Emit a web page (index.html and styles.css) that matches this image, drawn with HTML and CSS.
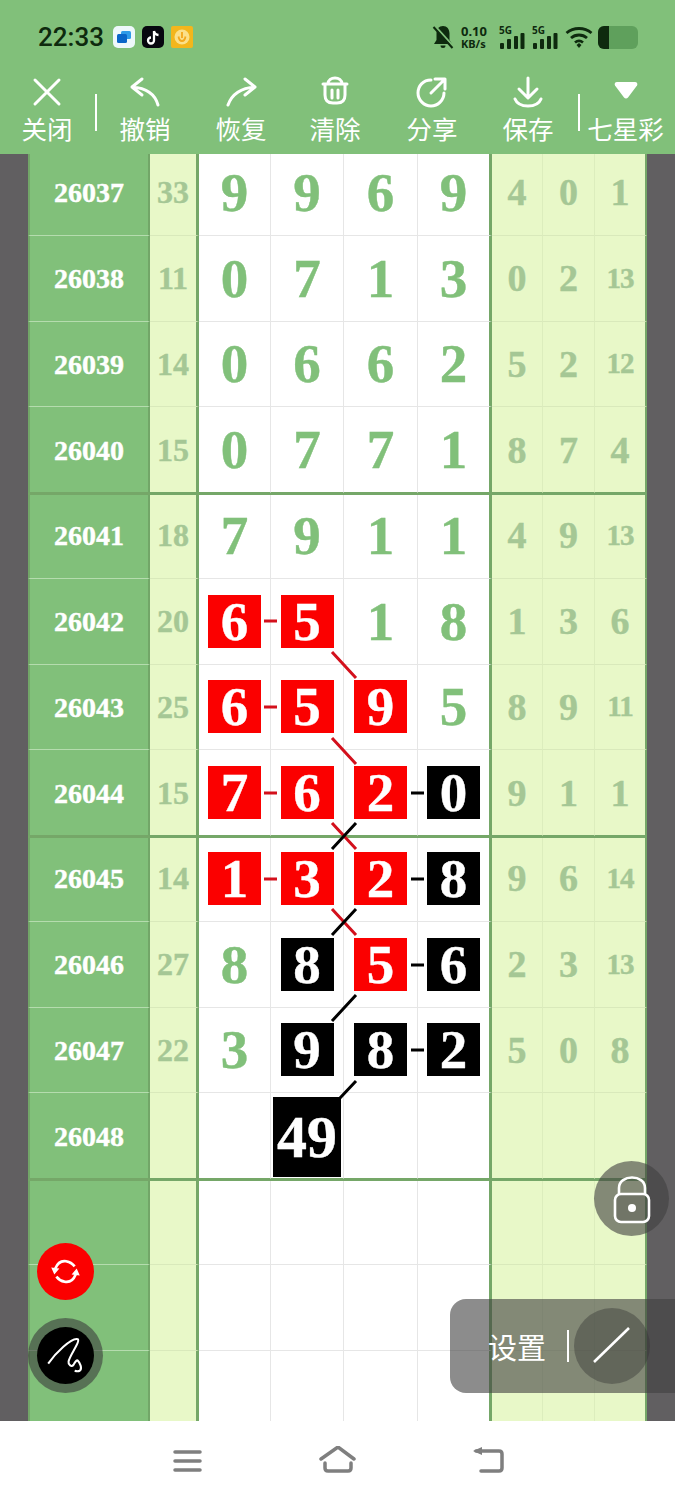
FILE: index.html
```html
<!DOCTYPE html>
<html lang="zh-CN">
<head>
    <meta charset="UTF-8">
    <meta name="viewport" content="width=device-width, initial-scale=1.0">
    <title>七星彩</title>
    <link rel="stylesheet" href="styles.css">
</head>
<body>
    <div class="header">
        <div class="status">
            <span class="time">22:33</span>
            <div class="app-icons">
                <svg class="app" viewBox="0 0 22 22"><rect width="22" height="22" rx="5" fill="#eef8fb"/><rect x="8" y="5" width="10" height="8" rx="1.5" fill="#2f9be8"/><rect x="4" y="8" width="10" height="9" rx="1.5" fill="#0a66c8"/></svg>
                <svg class="app" viewBox="0 0 22 22"><rect width="22" height="22" rx="5" fill="#07070f"/><path d="M12 5v9.500a3 3 0 1 1-3-3M12 5c.5 2.500 2 3.800 4.500 4" fill="none" stroke="#fff" stroke-width="2.300"/></svg>
                <svg class="app" viewBox="0 0 22 22"><rect width="22" height="22" rx="2" fill="#f3b61c"/><circle cx="11" cy="11" r="7.500" fill="#fbe08a"/><path d="M11 6v6M7.500 10.500c.5 3 2 4.500 3.500 4.500s3-1.500 3.500-4.500" fill="none" stroke="#f3a81c" stroke-width="1.800"/></svg>
            </div>
            <div class="sys-icons">
                <svg class="bell" viewBox="0 0 22 24"><path d="M11 1C7 1 4.500 4 4.500 8.500V15L2 19h18l-2.500-4V8.500C17.500 4 15 1 11 1z" fill="#0e2a0e"/><path d="M8.500 20.500a2.500 2.500 0 0 0 5 0z" fill="#0e2a0e"/><path d="M3 1l19 21" stroke="#81c07a" stroke-width="2"/><path d="M1.500 2l19 21" stroke="#0e2a0e" stroke-width="2"/></svg>
                <div class="speed"><b>0.10</b><b class="unit">KB/s</b></div>
                <svg class="signal" viewBox="0 0 26 24"><text x="0" y="9" class="net">5G</text><rect x="1" y="18" width="4" height="6" rx="1"/><rect x="8" y="14" width="4" height="10" rx="1"/><rect x="15" y="11" width="4" height="13" rx="1"/><rect x="21.500" y="8" width="4" height="16" rx="1"/></svg>
                <svg class="signal" viewBox="0 0 26 24"><text x="0" y="9" class="net">5G</text><rect x="1" y="18" width="4" height="6" rx="1"/><rect x="8" y="14" width="4" height="10" rx="1"/><rect x="15" y="11" width="4" height="13" rx="1"/><rect x="21.500" y="8" width="4" height="16" rx="1"/></svg>
                <svg class="wifi" viewBox="0 0 28 24"><path d="M1.500 8c7-6 18-6 25 0M6 13c4.500-4 11.500-4 16 0M10 17.500c2.500-2 5.500-2 8 0" fill="none" stroke="#0e2a0e" stroke-width="2.800"/><path d="M11.500 20l2.500-2 2.500 2-2.500 3z" fill="#0e2a0e"/></svg>
                <div class="battery"><div class="battery-fill"></div></div>
            </div>
        </div>
        <div class="toolbar">
            <div class="tool sep-right">
                <svg class="tool-icon" viewBox="0 0 36 36"><path d="M6 6l24 24M30 6L6 30"/></svg>
                <span>关闭</span>
            </div>
            <div class="tool">
                <svg class="tool-icon" viewBox="0 0 36 36"><path d="M15 5L5 13l10 8M5 13c14 1 23 7 26 18"/></svg>
                <span>撤销</span>
            </div>
            <div class="tool">
                <svg class="tool-icon" viewBox="0 0 36 36"><path d="M22 5l10 8-10 8M32 13C18 14 9 20 5 31"/></svg>
                <span>恢复</span>
            </div>
            <div class="tool">
                <svg class="tool-icon" viewBox="0 0 36 36"><path d="M11 10C11 2 25 2 25 10M6 10h24M8 10v11c0 6 3 8 8 8h4c5 0 8-2 8-8V10M15 16v8M21 16v8"/></svg>
                <span>清除</span>
            </div>
            <div class="tool">
                <svg class="tool-icon" viewBox="0 0 36 36"><path d="M17 6C9 6 4 12 4 19c0 7 6 13 13 13s13-6 13-13M17 19L31 5M21 5h10v10"/></svg>
                <span>分享</span>
            </div>
            <div class="tool">
                <svg class="tool-icon" viewBox="0 0 36 36"><path d="M18 4v19M9 15l9 9 9-9M5 25c2 5 7 7 13 7s11-2 13-7"/></svg>
                <span>保存</span>
            </div>
            <div class="tool sep-left">
                <svg class="tool-icon" viewBox="0 0 36 36"><path class="solid" d="M9 8h18c2 0 3 2 2 3.500l-9 12c-1 1.300-3 1.300-4 0l-9-12C6 10 7 8 9 8z"/></svg>
                <span>七星彩</span>
            </div>
        </div>
    </div>

    <div class="sheet">
        <div class="board">
            <div class="row"><div class="cell issue">26037</div><div class="cell sum">33</div><div class="cell main">9</div><div class="cell main">9</div><div class="cell main">6</div><div class="cell main last">9</div><div class="cell side">4</div><div class="cell side">0</div><div class="cell side">1</div></div>
            <div class="row"><div class="cell issue">26038</div><div class="cell sum">11</div><div class="cell main">0</div><div class="cell main">7</div><div class="cell main">1</div><div class="cell main last">3</div><div class="cell side">0</div><div class="cell side">2</div><div class="cell side two">13</div></div>
            <div class="row"><div class="cell issue">26039</div><div class="cell sum">14</div><div class="cell main">0</div><div class="cell main">6</div><div class="cell main">6</div><div class="cell main last">2</div><div class="cell side">5</div><div class="cell side">2</div><div class="cell side two">12</div></div>
            <div class="row end"><div class="cell issue">26040</div><div class="cell sum">15</div><div class="cell main">0</div><div class="cell main">7</div><div class="cell main">7</div><div class="cell main last">1</div><div class="cell side">8</div><div class="cell side">7</div><div class="cell side">4</div></div>
            <div class="row"><div class="cell issue">26041</div><div class="cell sum">18</div><div class="cell main">7</div><div class="cell main">9</div><div class="cell main">1</div><div class="cell main last">1</div><div class="cell side">4</div><div class="cell side">9</div><div class="cell side two">13</div></div>
            <div class="row"><div class="cell issue">26042</div><div class="cell sum">20</div><div class="cell main"><span class="box red">6</span></div><div class="cell main"><span class="box red">5</span></div><div class="cell main">1</div><div class="cell main last">8</div><div class="cell side">1</div><div class="cell side">3</div><div class="cell side">6</div></div>
            <div class="row"><div class="cell issue">26043</div><div class="cell sum">25</div><div class="cell main"><span class="box red">6</span></div><div class="cell main"><span class="box red">5</span></div><div class="cell main"><span class="box red">9</span></div><div class="cell main last">5</div><div class="cell side">8</div><div class="cell side">9</div><div class="cell side two">11</div></div>
            <div class="row end"><div class="cell issue">26044</div><div class="cell sum">15</div><div class="cell main"><span class="box red">7</span></div><div class="cell main"><span class="box red">6</span></div><div class="cell main"><span class="box red">2</span></div><div class="cell main last"><span class="box black">0</span></div><div class="cell side">9</div><div class="cell side">1</div><div class="cell side">1</div></div>
            <div class="row"><div class="cell issue">26045</div><div class="cell sum">14</div><div class="cell main"><span class="box red">1</span></div><div class="cell main"><span class="box red">3</span></div><div class="cell main"><span class="box red">2</span></div><div class="cell main last"><span class="box black">8</span></div><div class="cell side">9</div><div class="cell side">6</div><div class="cell side two">14</div></div>
            <div class="row"><div class="cell issue">26046</div><div class="cell sum">27</div><div class="cell main">8</div><div class="cell main"><span class="box black">8</span></div><div class="cell main"><span class="box red">5</span></div><div class="cell main last"><span class="box black">6</span></div><div class="cell side">2</div><div class="cell side">3</div><div class="cell side two">13</div></div>
            <div class="row"><div class="cell issue">26047</div><div class="cell sum">22</div><div class="cell main">3</div><div class="cell main"><span class="box black">9</span></div><div class="cell main"><span class="box black">8</span></div><div class="cell main last"><span class="box black">2</span></div><div class="cell side">5</div><div class="cell side">0</div><div class="cell side">8</div></div>
            <div class="row end"><div class="cell issue">26048</div><div class="cell sum"></div><div class="cell main"></div><div class="cell main"><span class="box black total">49</span></div><div class="cell main"></div><div class="cell main last"></div><div class="cell side"></div><div class="cell side"></div><div class="cell side"></div></div>
            <div class="row"><div class="cell issue"></div><div class="cell sum"></div><div class="cell main"></div><div class="cell main"></div><div class="cell main"></div><div class="cell main last"></div><div class="cell side"></div><div class="cell side"></div><div class="cell side"></div></div>
            <div class="row"><div class="cell issue"></div><div class="cell sum"></div><div class="cell main"></div><div class="cell main"></div><div class="cell main"></div><div class="cell main last"></div><div class="cell side"></div><div class="cell side"></div><div class="cell side"></div></div>
            <div class="row"><div class="cell issue"></div><div class="cell sum"></div><div class="cell main"></div><div class="cell main"></div><div class="cell main"></div><div class="cell main last"></div><div class="cell side"></div><div class="cell side"></div><div class="cell side"></div></div>
        </div>

        <!-- connector lines, in page coordinates -->
        <svg class="links" viewBox="0 154 675 1267">
            <g class="link-red">
                <path d="M264 621h13M264 707h13M264 793h13M264 879h13"/>
                <path d="M332 652l24 26M332 738l24 26M332 823l24 26M332 909l24 26"/>
            </g>
            <g class="link-black">
                <path d="M411 793h13M411 879h13M411 965h13M411 1050h13"/>
                <path d="M356 823l-24 26M356 909l-24 26M356 995l-24 26M356 1081l-16 17"/>
            </g>
        </svg>

        <div class="fab fab-sync">
            <svg viewBox="0 0 56 56"><path d="M18 25c2-5 6-8 11-7 3 .5 6 2.500 8 5M38 31c-2 5-6 8-11 7-3-.5-6-2.500-8-5" fill="none" stroke="#fff" stroke-width="2.600"/><path d="M14 24l8 1-5 6zM42 32l-8-1 5-6z" fill="#fff"/></svg>
        </div>
        <div class="pen-ring">
            <div class="fab-pen">
                <svg viewBox="0 0 56 56"><path d="M11 36C18 26 34 10 40 12c3 2-8 16-9 22-.5 3 3 6 5 3 1-2 3-5 4-4 2 2 5 8 2 10-2 1-5 0-5 0" fill="none" stroke="#fff" stroke-width="2"/></svg>
            </div>
        </div>
        <div class="lock">
            <svg viewBox="0 0 40 48"><path d="M7 19v-6C7-1 33-1 33 13v6" fill="none" stroke="#fff" stroke-width="2.600"/><rect x="3" y="19" width="34" height="28" rx="6" fill="rgba(60,60,60,.25)" stroke="#fff" stroke-width="2.600"/><circle cx="20" cy="33" r="4" fill="#fff"/></svg>
        </div>
        <div class="settings">
            <span class="settings-label">设置</span>
            <span class="settings-bar"></span>
            <div class="settings-knob">
                <svg viewBox="0 0 76 76"><path d="M20 54l35-34" stroke="#fff" stroke-width="2.600"/></svg>
            </div>
        </div>
    </div>

    <div class="navbar">
        <svg class="nav-icon menu-icon" viewBox="0 0 30 24"><path d="M2 3h25M2 12h25M2 21h25"/></svg>
        <svg class="nav-icon home-icon" viewBox="0 0 38 30"><path d="M2 13L19 1l16 12M6 17v5c0 2 1 3 3 3h20c2 0 3-1 3-3v-5"/></svg>
        <svg class="nav-icon back-icon" viewBox="0 0 34 30"><path d="M4 5h23c2 0 3 1 3 3v14c0 2-1 3-3 3H9"/><path class="solid" d="M1 5l9-4v8z"/></svg>
    </div>
</body>
</html>
```

FILE: styles.css
```css
* {
    box-sizing: border-box;
}
html, body {
    margin: 0;
    padding: 0;
}
body {
    width: 675px;
    height: 1500px;
    overflow: hidden;
    font-family: "Noto Sans CJK SC", "Noto Sans", sans-serif;
    background-color: #fff;
}

/* header */
.header {
    height: 154px;
    background-color: #81c07a;
}
.status {
    height: 72px;
    display: flex;
    align-items: center;
    padding: 2px 37px 0 38px;
}
.time {
    font-family: Roboto, sans-serif;
    font-size: 26px;
    font-weight: 500;
    color: #0e2a0e;
    width: 75px;
}
.app-icons {
    display: flex;
    gap: 7px;
}
.app {
    width: 22px;
    height: 22px;
    display: block;
}
.sys-icons {
    margin-left: auto;
    display: flex;
    align-items: center;
}
.bell {
    width: 22px;
    height: 24px;
    margin-right: 7px;
}
.speed {
    width: 30px;
    display: flex;
    flex-direction: column;
    font-family: "Noto Sans", sans-serif;
    font-size: 13px;
    line-height: 13px;
    color: #0e2a0e;
    margin-right: 8px;
}
.speed .unit {
    font-size: 11px;
    line-height: 11px;
}
.signal {
    width: 26px;
    height: 24px;
    margin-right: 7px;
    fill: #0e2a0e;
    overflow: visible;
}
.net {
    font-family: "Noto Sans", sans-serif;
    font-size: 10px;
    font-weight: 700;
}
.wifi {
    width: 28px;
    height: 24px;
    margin-right: 5px;
}
.battery {
    width: 40px;
    height: 23px;
    border-radius: 6px;
    background-color: #5fa05c;
    overflow: hidden;
}
.battery-fill {
    width: 11px;
    height: 100%;
    background-color: #0e2a0e;
}

.toolbar {
    display: grid;
    grid-template-columns: 94px 102px 90px 98px 96px 96px 99px;
    height: 82px;
}
.tool {
    position: relative;
    display: flex;
    flex-direction: column;
    align-items: center;
    color: #fff;
    font-size: 25.5px;
    line-height: 36px;
    padding-top: 2px;
    white-space: nowrap;
}
.tool-icon {
    width: 36px;
    height: 36px;
    display: block;
    fill: none;
    stroke: #fff;
    stroke-width: 3;
    stroke-linecap: round;
    stroke-linejoin: round;
}
.tool-icon .solid {
    fill: #fff;
    stroke: none;
}
.sep-right::after,
.sep-left::after {
    content: "";
    position: absolute;
    top: 22px;
    height: 37px;
    width: 2px;
    background-color: #fff;
}
.sep-right::after {
    right: -3px;
}
.sep-left::after {
    left: 2px;
}

/* lottery sheet */
.sheet {
    position: relative;
    height: 1267px;
    overflow: hidden;
    background-color: #615f61;
}
.board {
    width: 619px;
    margin: -4px 0 0 28px;
}
.row {
    display: grid;
    grid-template-columns: 122px 49px 72px 73px 74px 74px 51px 52px 52px;
    height: 85.75px;
}
.cell {
    display: flex;
    align-items: center;
    justify-content: center;
    font-family: "Liberation Serif", serif;
    font-weight: 700;
    line-height: 1;
    -webkit-text-stroke: 0.4px currentColor;
}
.issue {
    background-color: #81c07a;
    color: #fff;
    font-size: 28px;
    padding-top: 2px;
    border-left: 2px solid #72a668;
    border-right: 2px solid #72a668;
    border-bottom: 1px solid #b5dcae;
}
.sum {
    background-color: #e8f8c8;
    color: #a5c795;
    font-size: 32px;
    border-right: 3px solid #75a768;
    border-bottom: 1px solid #d9e9bb;
}
.main {
    background-color: #fff;
    color: #81c07a;
    font-size: 55px;
    border-right: 1px solid #e6e6e6;
    border-bottom: 1px solid #e6e6e6;
}
.main.last {
    border-right: 3px solid #75a768;
}
.side {
    background-color: #e8f8c8;
    color: #a5c795;
    font-size: 38px;
    border-right: 1px solid #dcedbd;
    border-bottom: 1px solid #d9e9bb;
}
.side:last-child {
    border-right: 2px solid #75a768;
}
.side.two {
    font-size: 29px;
    letter-spacing: -1px;
}

/* the heavy line sits across the row boundary */
.row.end {
    position: relative;
    z-index: 1;
    box-shadow: 0 2px 0 #75a768;
}
.row.end .cell {
    border-bottom: 1px solid #75a768;
}

.box {
    width: 53px;
    height: 53px;
    display: flex;
    align-items: center;
    justify-content: center;
    color: #fff;
    box-shadow: 0 0 5px 4px rgba(255, 255, 255, 0.9);
}
.red {
    background-color: #fb0000;
}
.black {
    background-color: #000;
}
.box.total {
    width: 68px;
    height: 80px;
    margin-top: 2px;
    font-size: 60px;
    box-shadow: none;
}

.links {
    position: absolute;
    z-index: 2;
    left: 0;
    top: 0;
    width: 675px;
    height: 1267px;
    fill: none;
    stroke-width: 3;
}
.link-red {
    stroke: #d3101c;
}
.link-black {
    stroke: #000;
}

/* floating buttons */
.fab-sync {
    position: absolute;
    z-index: 3;
    left: 37px;
    top: 1089px;
    width: 57px;
    height: 57px;
    border-radius: 50%;
    background-color: #fb0000;
}
.pen-ring {
    position: absolute;
    z-index: 3;
    left: 28px;
    top: 1164px;
    width: 75px;
    height: 75px;
    border-radius: 50%;
    background-color: rgba(60, 60, 60, 0.6);
    display: flex;
    align-items: center;
    justify-content: center;
}
.fab-pen {
    width: 57px;
    height: 57px;
    border-radius: 50%;
    background-color: #000;
}
.fab-sync svg,
.fab-pen svg {
    display: block;
    width: 57px;
    height: 57px;
}
.lock {
    position: absolute;
    z-index: 3;
    left: 594px;
    top: 1007px;
    width: 75px;
    height: 75px;
    border-radius: 50%;
    background-color: rgba(64, 64, 64, 0.6);
    display: flex;
    align-items: center;
    justify-content: center;
}
.lock svg {
    width: 40px;
    height: 48px;
    overflow: visible;
}
.settings {
    position: absolute;
    z-index: 3;
    left: 450px;
    top: 1145px;
    width: 225px;
    height: 94px;
    border-radius: 16px 0 0 16px;
    background-color: rgba(64, 64, 64, 0.6);
    display: flex;
    align-items: center;
    padding-left: 38px;
    color: #fff;
    font-size: 29px;
}
.settings-bar {
    width: 2px;
    height: 32px;
    margin-left: 21px;
    background-color: #fff;
}
.settings-knob {
    width: 76px;
    height: 76px;
    margin-left: 5px;
    border-radius: 50%;
    background-color: rgba(50, 50, 50, 0.4);
}
.settings-knob svg {
    display: block;
    width: 76px;
    height: 76px;
}

/* navigation bar */
.navbar {
    height: 79px;
    position: relative;
    display: flex;
    align-items: center;
    padding-left: 173px;
    background-color: #fff;
}
.nav-icon {
    display: block;
    fill: none;
    stroke: #7f7f7f;
    stroke-width: 3.5;
    stroke-linecap: round;
    stroke-linejoin: round;
}
.nav-icon .solid {
    fill: #7f7f7f;
    stroke: none;
}
.menu-icon {
    width: 30px;
    height: 24px;
}
.home-icon {
    width: 38px;
    height: 30px;
    margin-left: 116px;
}
.back-icon {
    width: 34px;
    height: 30px;
    margin-left: 115px;
}
```
